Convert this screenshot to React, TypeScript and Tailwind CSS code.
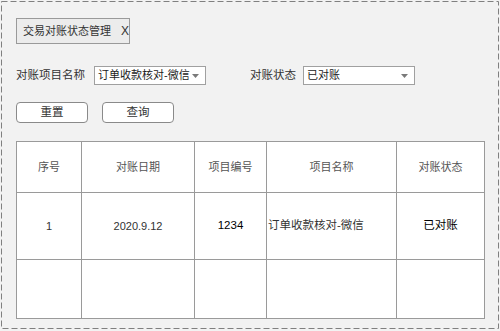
import React from "react";

const font = { fontFamily: '"Liberation Sans","Noto Sans CJK SC",sans-serif' };

function Caret() {
  return (
    <svg width="7" height="4" viewBox="0 0 7 4" className="shrink-0">
      <path d="M0 0 L7 0 L3.5 4 Z" fill="#7a7a7a" />
    </svg>
  );
}

function Select({ value, w }: { value: string; w: string }) {
  return (
    <div className={`${w} h-[19px] border border-[#a0a0a0] bg-white flex items-center justify-between pl-[3px] pr-[6px] text-[11px] text-[#222] leading-none whitespace-nowrap`}>
      <span>{value}</span>
      <Caret />
    </div>
  );
}

export default function App() {
  const head = ["序号", "对账日期", "项目编号", "项目名称", "对账状态"];
  return (
    <div style={font} className="relative w-[500px] h-[331px] bg-[#f2f2f2] pt-[18px] pl-[16px] flex flex-col">
      <svg className="absolute inset-0 pointer-events-none" width="500" height="331">
        <rect x="1.5" y="1.5" width="497" height="327" fill="none" stroke="#808080" strokeWidth="1" strokeDasharray="6 3" />
      </svg>
      <div className="w-[114px] h-[26px] border border-[#9a9a9a] bg-[#ececec] flex items-center pl-[6px] text-[11px] text-[#333] leading-none whitespace-nowrap">
        <span>交易对账状态管理</span>
        <span className="ml-[10px] text-[12px]">X</span>
      </div>

      <div className="mt-[22px] flex items-center h-[19px] text-[11.5px] text-[#333] whitespace-nowrap">
        <span className="w-[78px]">对账项目名称</span>
        <Select value="订单收款核对-微信" w="w-[112px]" />
        <span className="ml-[44px] w-[53px]">对账状态</span>
        <Select value="已对账" w="w-[112px]" />
      </div>

      <div className="mt-[17px] flex gap-[14px]">
        <button className="w-[72px] h-[21px] rounded-[4px] border border-[#8a8a8a] bg-white text-[11.5px] text-[#333] leading-none">重置</button>
        <button className="w-[72px] h-[21px] rounded-[4px] border border-[#8a8a8a] bg-white text-[11.5px] text-[#333] leading-none">查询</button>
      </div>

      <table className="mt-[18px] w-[468px] table-fixed border-collapse bg-white">
        <colgroup>
          <col className="w-[65px]" />
          <col className="w-[113px]" />
          <col className="w-[72px]" />
          <col className="w-[130px]" />
          <col className="w-[88px]" />
        </colgroup>
        <tbody>
          <tr className="h-[51px]">
            {head.map((h) => (
              <td key={h} className="border border-[#9a9a9a] text-center text-[11px] text-[#555] p-0">{h}</td>
            ))}
          </tr>
          <tr className="h-[67px]">
            <td className="border border-[#9a9a9a] text-center text-[11px] text-[#333] p-0">1</td>
            <td className="border border-[#9a9a9a] text-center text-[11px] text-[#333] p-0">2020.9.12</td>
            <td className="border border-[#9a9a9a] text-center text-[11.5px] text-[#000] p-0">1234</td>
            <td className="border border-[#9a9a9a] text-left text-[11.5px] text-[#333] p-0 pl-[1px] whitespace-nowrap">订单收款核对-微信</td>
            <td className="border border-[#9a9a9a] text-center text-[11.5px] text-[#000] p-0">已对账</td>
          </tr>
          <tr className="h-[59px]">
            {head.map((h) => (
              <td key={h} className="border border-[#9a9a9a] p-0"></td>
            ))}
          </tr>
        </tbody>
      </table>
    </div>
  );
}
